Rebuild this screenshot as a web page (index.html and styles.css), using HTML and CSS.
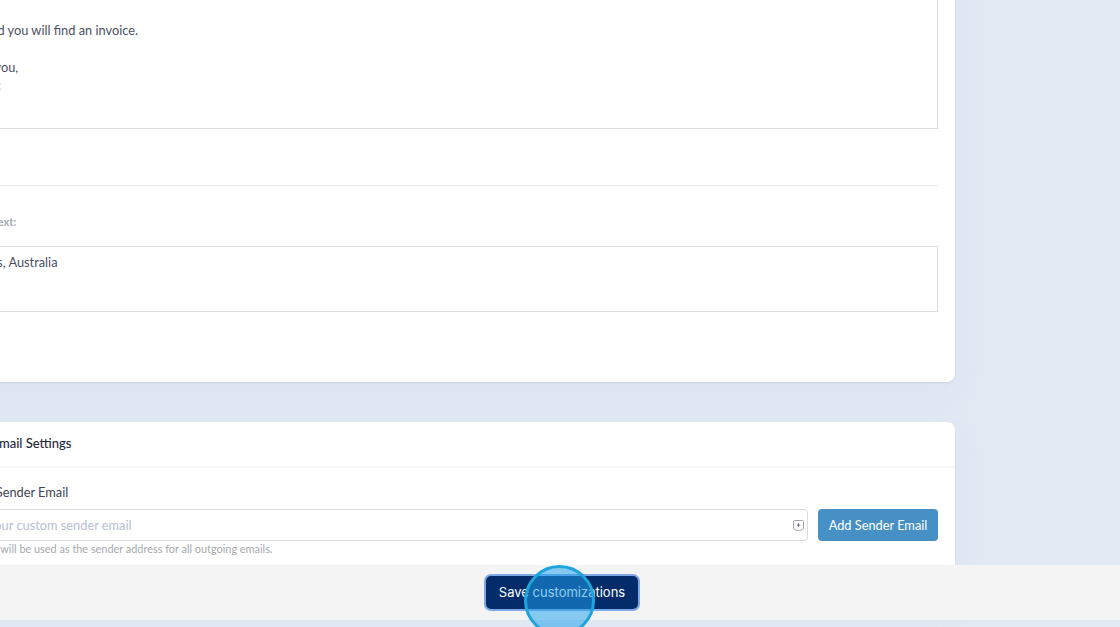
FILE: index.html
```html
<!DOCTYPE html>
<html lang="en">
<head>
<meta charset="utf-8">
<title>Customizations</title>
<link rel="stylesheet" href="styles.css">
</head>
<body>
<div class="page">
  <section class="card card-top">
    <div class="area area-main">
      <p class="line line-clip">Attached you will find an invoice.</p>
      <p class="line">&nbsp;</p>
      <p class="line line-thanks">Thank you,</p>
      <p class="line line-sign">Team:</p>
    </div>
    <hr class="divider">
    <label class="label-small">Footer text:</label>
    <div class="area area-footer">
      <p class="line line-address">New South Wales, Australia</p>
    </div>
  </section>
  <section class="card card-email">
    <h2 class="card-title">Custom Email Settings</h2>
    <div class="card-body">
      <label class="label">Custom Sender Email</label>
      <div class="field-row">
        <div class="input">
          <span class="placeholder">Enter your custom sender email</span>
          <svg class="input-icon" width="11" height="11" viewBox="0 0 11 11" fill="none" stroke="#a4a8ae" stroke-width="1"><path d="M1.500.5h8a1 1 0 0 1 1 1v6.800a1 1 0 0 1-1 1H8.300l-.5 1H3.200l-.5-1H1.500a1 1 0 0 1-1-1V1.500a1 1 0 0 1 1-1z"/><path d="M5.500 3.200v3.600M3.700 5h3.600" stroke="#70757d"/></svg>
        </div>
        <button class="btn-add" type="button">Add Sender Email</button>
      </div>
      <p class="help">This will be used as the sender address for all outgoing emails.</p>
    </div>
  </section>
</div>
<div class="save-bar">
  <button class="btn-save" type="button">Save customizations</button>
</div>
<div class="click-ring"></div>
</body>
</html>
```
FILE: styles.css
```css
* { box-sizing: border-box; }
html, body { margin: 0; height: 100%; overflow: hidden; }
body {
  background: #e1e9f3;
  font-family: Lato, "Liberation Sans", sans-serif;
  color: #4a4f63;
  position: relative;
}
.page {
  margin-left: -300px;
  margin-top: -60px;
  width: 1254.500px;
  display: flex;
  flex-direction: column;
  gap: 40px;
}
.card {
  background: #fff;
  border-radius: 8px;
  box-shadow: 0 1px 2px rgba(120, 140, 170, .2), 0 10px 24px rgba(210, 222, 238, .3);
}
.card-top {
  padding: 0 16.500px 70px 17px;
  height: 442px;
}
.area {
  border: 1px solid #d9dce1;
  padding: 0 280px;
}
.area-main { height: 189px; padding-top: 80px; }
.area-footer { height: 66px; padding-top: 6px; }
.line {
  margin: 0;
  font-size: 12.800px;
  line-height: 18.300px;
  white-space: nowrap;
}
.line-clip { margin-left: -44px; }
.line-thanks { margin-left: -41px; }
.line-sign { margin-left: -30px; }
.line-address { margin-left: -95px; }
.divider {
  border: 0;
  border-top: 1px solid #e9ebee;
  margin: 56px 0 29px;
}
.label-small {
  display: block;
  font-size: 11px;
  font-weight: 700;
  color: #a8abb0;
  line-height: 14px;
  margin-bottom: 17px;
  padding-left: 242px;
}
.card-title {
  margin: 0;
  font-size: 13px;
  font-weight: 500;
  color: #23283a;
  height: 46px;
  line-height: 43px;
  padding-left: 244px;
  border-bottom: 2px solid #f6f7f8;
}
.card-body { padding: 15px 16.500px 40px 17px; }
.label {
  display: block;
  font-size: 12.800px;
  line-height: 18px;
  color: #3f4455;
  padding-left: 232px;
  margin-bottom: 8px;
}
.field-row { display: flex; gap: 10px; }
.input {
  flex: 1;
  height: 32px;
  border: 1px solid #d9dce1;
  border-radius: 4px;
  display: flex;
  align-items: center;
  justify-content: space-between;
  padding: 0 3px 0 237px;
}
.placeholder { font-size: 12.800px; color: #b8c0d2; white-space: nowrap; }
.input-icon { flex: none; }
.btn-add {
  width: 120px;
  height: 32px;
  border: 0;
  border-radius: 4px;
  background: #4690c6;
  color: #fff;
  font-family: inherit;
  font-size: 12.800px;
}
.help {
  margin: 1px 0 0;
  font-size: 10.900px;
  line-height: 14px;
  color: #a6a9ae;
  padding-left: 261px;
  white-space: nowrap;
}
.save-bar {
  position: absolute;
  left: 0;
  right: 0;
  top: 565px;
  height: 55px;
  background: #f4f4f5;
  display: flex;
  justify-content: center;
  align-items: center;
  padding-left: 4px;
}
.btn-save {
  width: 156px;
  height: 37px;
  padding: 0 0 2px;
  background: #042c6b;
  color: #fff;
  border: 2px solid #7fa9e6;
  border-radius: 7px;
  font-family: Inter, "Liberation Sans", sans-serif;
  font-size: 13px;
}
.click-ring {
  position: absolute;
  left: 523.500px;
  top: 565px;
  width: 71px;
  height: 71px;
  border-radius: 50%;
  border: 3px solid #1fa4dc;
  background: rgba(30, 160, 235, .52);
}
```
